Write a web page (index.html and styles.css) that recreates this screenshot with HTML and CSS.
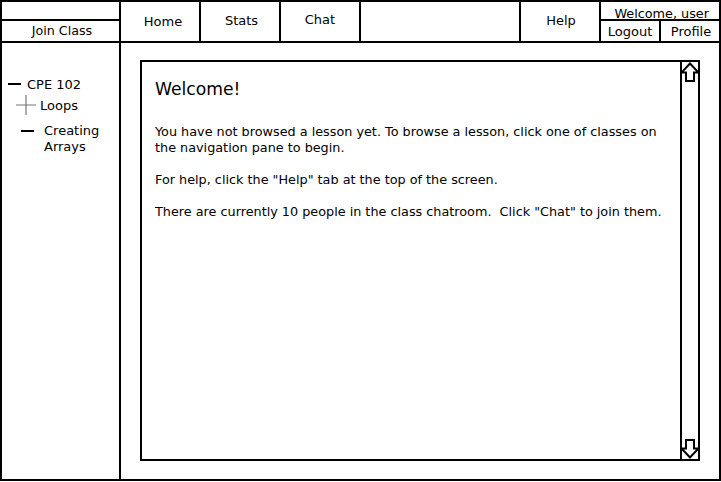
FILE: index.html
```html
<!DOCTYPE html>
<html>
<head>
<meta charset="utf-8">
<link rel="stylesheet" href="styles.css">
</head>
<body>
<div class="app">
  <header class="topbar">
    <div class="join-cell">
      <div class="join-spacer"></div>
      <div class="join-label">Join Class</div>
    </div>
    <div class="tab tab-home">Home</div>
    <div class="tab tab-stats">Stats</div>
    <div class="tab tab-chat">Chat</div>
    <div class="tab tab-empty"></div>
    <div class="tab tab-help">Help</div>
    <div class="user-cell">
      <div class="welcome-user">Welcome, user</div>
      <div class="user-links">
        <div class="user-link logout">Logout</div>
        <div class="user-link profile">Profile</div>
      </div>
    </div>
  </header>
  <div class="main">
    <nav class="sidebar">
      <div class="tree-item level0"><span class="dash"></span><span>CPE 102</span></div>
      <div class="tree-item level1">
        <svg class="plus" width="20" height="20" viewBox="0 0 20 20"><path d="M10 0V20M0 10H20" stroke="#777" stroke-width="1.2" fill="none"/></svg>
        <span>Loops</span>
      </div>
      <div class="tree-item level2"><span class="dash"></span><span class="leaf">Creating<br>Arrays</span></div>
    </nav>
    <section class="content">
      <div class="panel">
        <div class="panel-text">
          <h1 class="title">Welcome!</h1>
          <p>You have not browsed a lesson yet. To browse a lesson, click one of classes on the navigation pane to begin.</p>
          <p>For help, click the "Help" tab at the top of the screen.</p>
          <p>There are currently 10 people in the class chatroom.&nbsp; Click "Chat" to join them.</p>
        </div>
        <div class="scrollbar">
          <svg class="arrow" width="20" height="21" viewBox="0 0 20 21"><path d="M10 1.5L1.5 10.5H6V19H14V10.5H18.5Z" fill="#fff" stroke="#000" stroke-width="2" stroke-linejoin="miter"/></svg>
          <div class="track"></div>
          <svg class="arrow" width="20" height="21" viewBox="0 0 20 21"><path d="M10 19.5L1.5 10.5H6V2H14V10.5H18.5Z" fill="#fff" stroke="#000" stroke-width="2" stroke-linejoin="miter"/></svg>
        </div>
      </div>
    </section>
  </div>
</div>
</body>
</html>
```
FILE: styles.css
```css
* { box-sizing: border-box; }
html, body { margin: 0; padding: 0; background: #fff; }
body {
  font-family: "DejaVu Sans", sans-serif;
  font-size: 13px;
  color: #000;
}
.app {
  width: 721px;
  height: 481px;
  border: 2px solid #000;
  display: flex;
  flex-direction: column;
}
.topbar {
  display: flex;
  height: 41px;
  border-bottom: 2px solid #000;
  flex: none;
}
.join-cell {
  width: 119px;
  border-right: 2px solid #000;
  display: flex;
  flex-direction: column;
}
.join-spacer {
  height: 19px;
  border-bottom: 2px solid #000;
}
.join-label {
  flex: 1;
  display: flex;
  align-items: center;
  justify-content: center;
  padding-bottom: 1px;
  padding-left: 3px;
  font-size: 12.7px;
}
.tab {
  width: 80px;
  border-right: 2px solid #000;
  display: flex;
  align-items: center;
  justify-content: center;
}
.tab-home { padding-bottom: 1px; padding-left: 6px; }
.tab-stats { padding-bottom: 3px; padding-left: 3px; }
.tab-chat { padding-bottom: 5px; }
.tab-empty { width: 160px; }
.tab-help { padding-bottom: 3px; padding-left: 2px; }
.user-cell {
  flex: 1;
  display: flex;
  flex-direction: column;
}
.welcome-user {
  height: 19px;
  border-bottom: 2px solid #000;
  display: flex;
  align-items: center;
  justify-content: flex-end;
  padding-right: 10px;
  padding-top: 5px;
  font-size: 12.8px;
}
.user-links {
  flex: 1;
  display: flex;
}
.user-link {
  display: flex;
  align-items: center;
  justify-content: center;
  padding-top: 1px;
}
.logout { width: 60px; border-right: 2px solid #000; }
.profile { flex: 1; padding-left: 2px; }
.main {
  flex: 1;
  display: flex;
}
.sidebar {
  width: 119px;
  border-right: 2px solid #000;
  padding-top: 31px;
  font-size: 13px;
}
.tree-item {
  display: flex;
  align-items: center;
}
.dash {
  display: inline-block;
  width: 13px;
  height: 2px;
  background: #000;
}
.level0 { padding-left: 6px; height: 20px; }
.level0 .dash { margin-right: 6px; }
.level1 { padding-left: 14px; height: 20px; margin-top: 1px; }
.level1 .plus { margin-right: 4px; }
.level2 { padding-left: 19px; align-items: flex-start; margin-top: 8px; line-height: 16px; }
.level2 .dash { margin-top: 7px; margin-right: 10px; }
.content {
  flex: 1;
  padding: 17px 19px 19px 19px;
}
.panel {
  width: 560px;
  height: 401px;
  border: 2px solid #000;
  display: flex;
}
.panel-text {
  flex: 1;
  padding: 14px 4px 0 13px;
  line-height: 16px;
  font-size: 12.8px;
}
.title {
  font-weight: normal;
  font-size: 17.2px;
  line-height: 26px;
  margin: 0 0 22px 0;
}
.panel-text p {
  margin: 0 0 16px 0;
}
.scrollbar {
  width: 20px;
  border-left: 2px solid #000;
  display: flex;
  flex-direction: column;
  margin-right: -2px;
  border-right: 2px solid #000;
  margin-left: -2px;
}
.arrow {
  display: block;
  flex: none;
  margin-left: -2px;
}
.track { flex: 1; }
```
